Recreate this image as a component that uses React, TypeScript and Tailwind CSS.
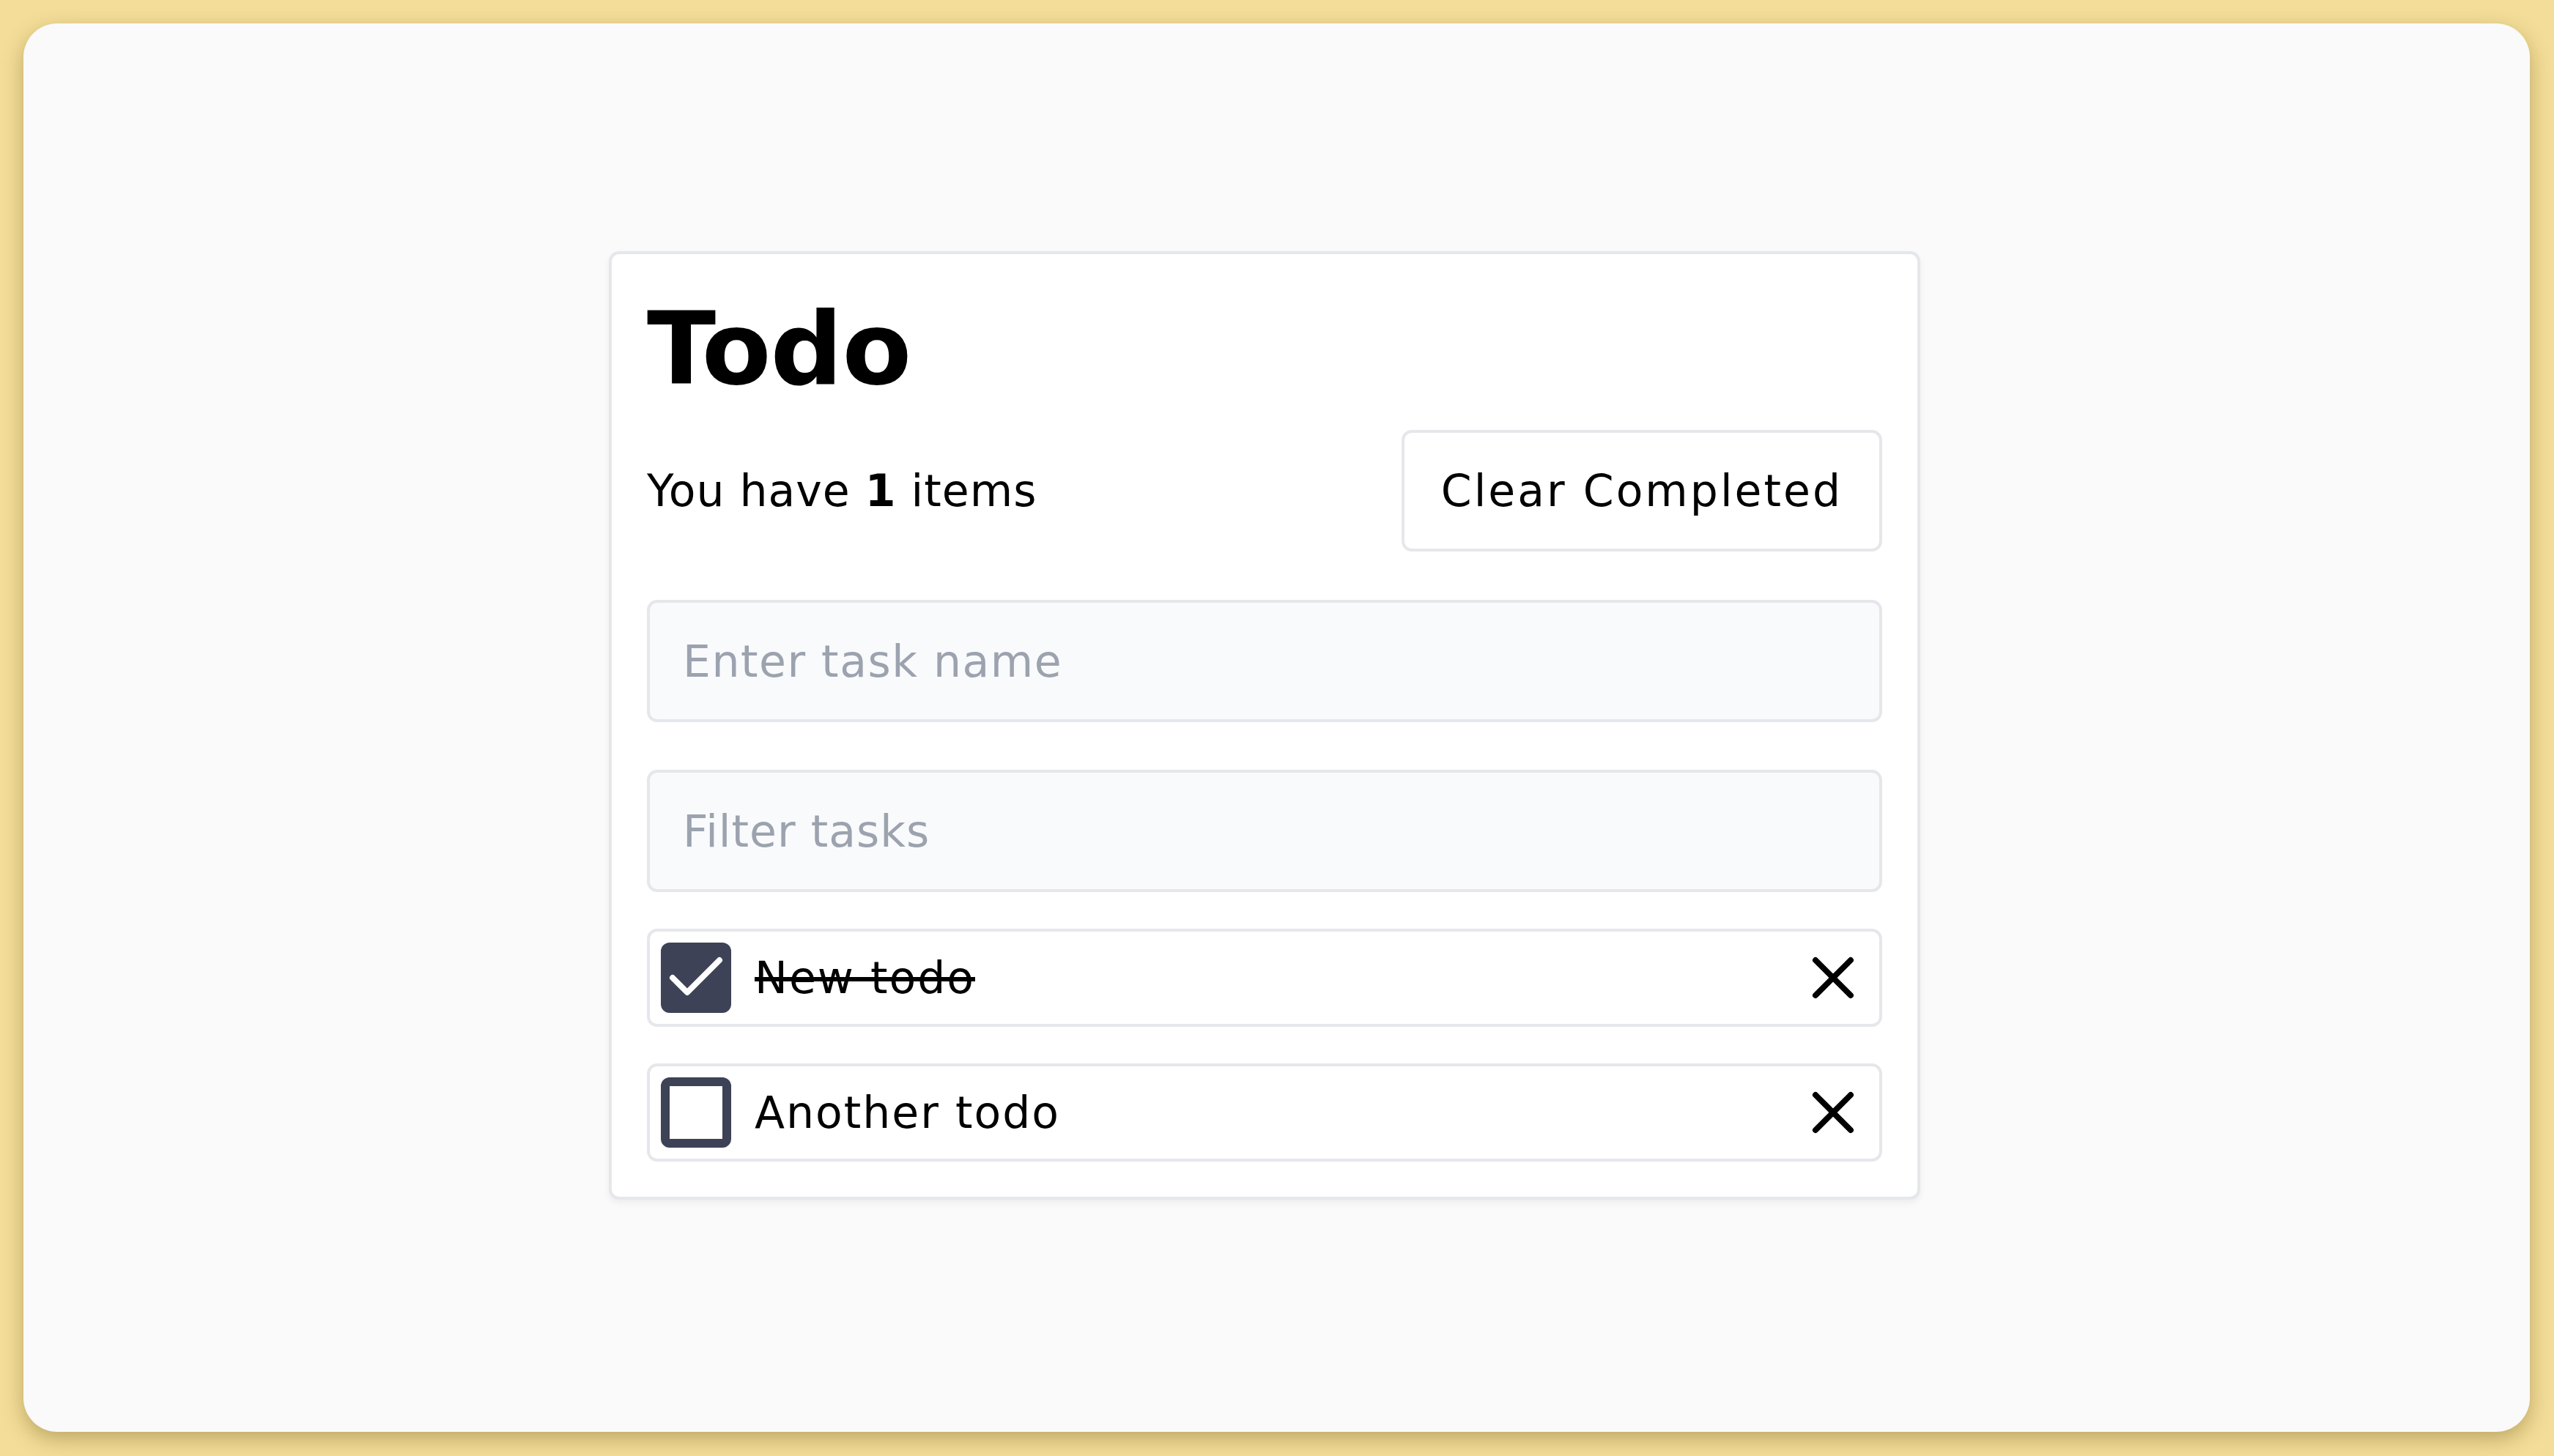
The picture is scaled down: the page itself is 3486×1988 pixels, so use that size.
import { Check, X } from "lucide-react";

type TodoItem = {
  id: number;
  label: string;
  done: boolean;
};

const todos: TodoItem[] = [
  { id: 1, label: "New todo", done: true },
  { id: 2, label: "Another todo", done: false },
];

const TodoRow = ({ label, done }: TodoItem) => {
  return (
    <div className="flex items-center gap-[32px] h-[134px] px-[15px] bg-white border-4 border-[#e5e7eb] rounded-[14px]">
      {done ? (
        <div className="size-[96px] shrink-0 rounded-[12px] bg-[#3d4256] flex items-center justify-center">
          <Check className="size-[96px] text-white" strokeWidth={2} />
        </div>
      ) : (
        <div className="size-[96px] shrink-0 rounded-[12px] border-[12px] border-[#3d4256] bg-white" />
      )}
      <span
        className={`text-[60px] text-black leading-none tracking-[2px] ${done ? "line-through decoration-[6px]" : ""}`}
      >
        {label}
      </span>
      <X className="ml-auto size-[96px] text-black shrink-0" strokeWidth={2} />
    </div>
  );
};

export default function App() {
  const remaining = todos.filter((t) => !t.done).length;

  return (
    <div className="min-h-[1988px] w-full bg-[#f3dd98] p-[32px] pr-[33px] pb-[33px] font-['DejaVu_Sans',sans-serif]">
      <div className="h-[1923px] bg-[#fafafa] rounded-[46px] shadow-[0_10px_28px_rgba(90,70,10,0.35)] flex items-center justify-center pr-[33px] pb-[6px]">
        <div className="w-[1790px] bg-white border-4 border-[#e5e7eb] rounded-[14px] shadow-[0_4px_10px_rgba(0,0,0,0.06)] p-[48px]">
          <h1 className="mt-[13px] h-[138px] text-[138px] leading-none font-bold tracking-[-1px] text-black">
            Todo
          </h1>

          <div className="mt-[41px] flex items-center justify-between">
            <p className="text-[60px] text-black tracking-[1px]">
              You have <span className="font-bold">{remaining}</span> items
            </p>
            <button className="h-[166px] px-[50px] bg-white border-4 border-[#e5e7eb] rounded-[14px] text-[60px] text-black tracking-[3px]">
              Clear Completed
            </button>
          </div>

          <input
            placeholder="Enter task name"
            className="mt-[66px] block w-full h-[167px] px-[45px] bg-[#f9fafb] border-4 border-[#e5e7eb] rounded-[14px] text-[60px] tracking-[1.5px] placeholder:text-[#9ca3af] outline-none"
          />
          <input
            placeholder="Filter tasks"
            className="mt-[65px] block w-full h-[167px] px-[45px] bg-[#f9fafb] border-4 border-[#e5e7eb] rounded-[14px] text-[60px] tracking-[1px] placeholder:text-[#9ca3af] outline-none"
          />

          <div className="mt-[50px] flex flex-col gap-[50px]">
            {todos.map((t) => (
              <TodoRow key={t.id} {...t} />
            ))}
          </div>
        </div>
      </div>
    </div>
  );
}
